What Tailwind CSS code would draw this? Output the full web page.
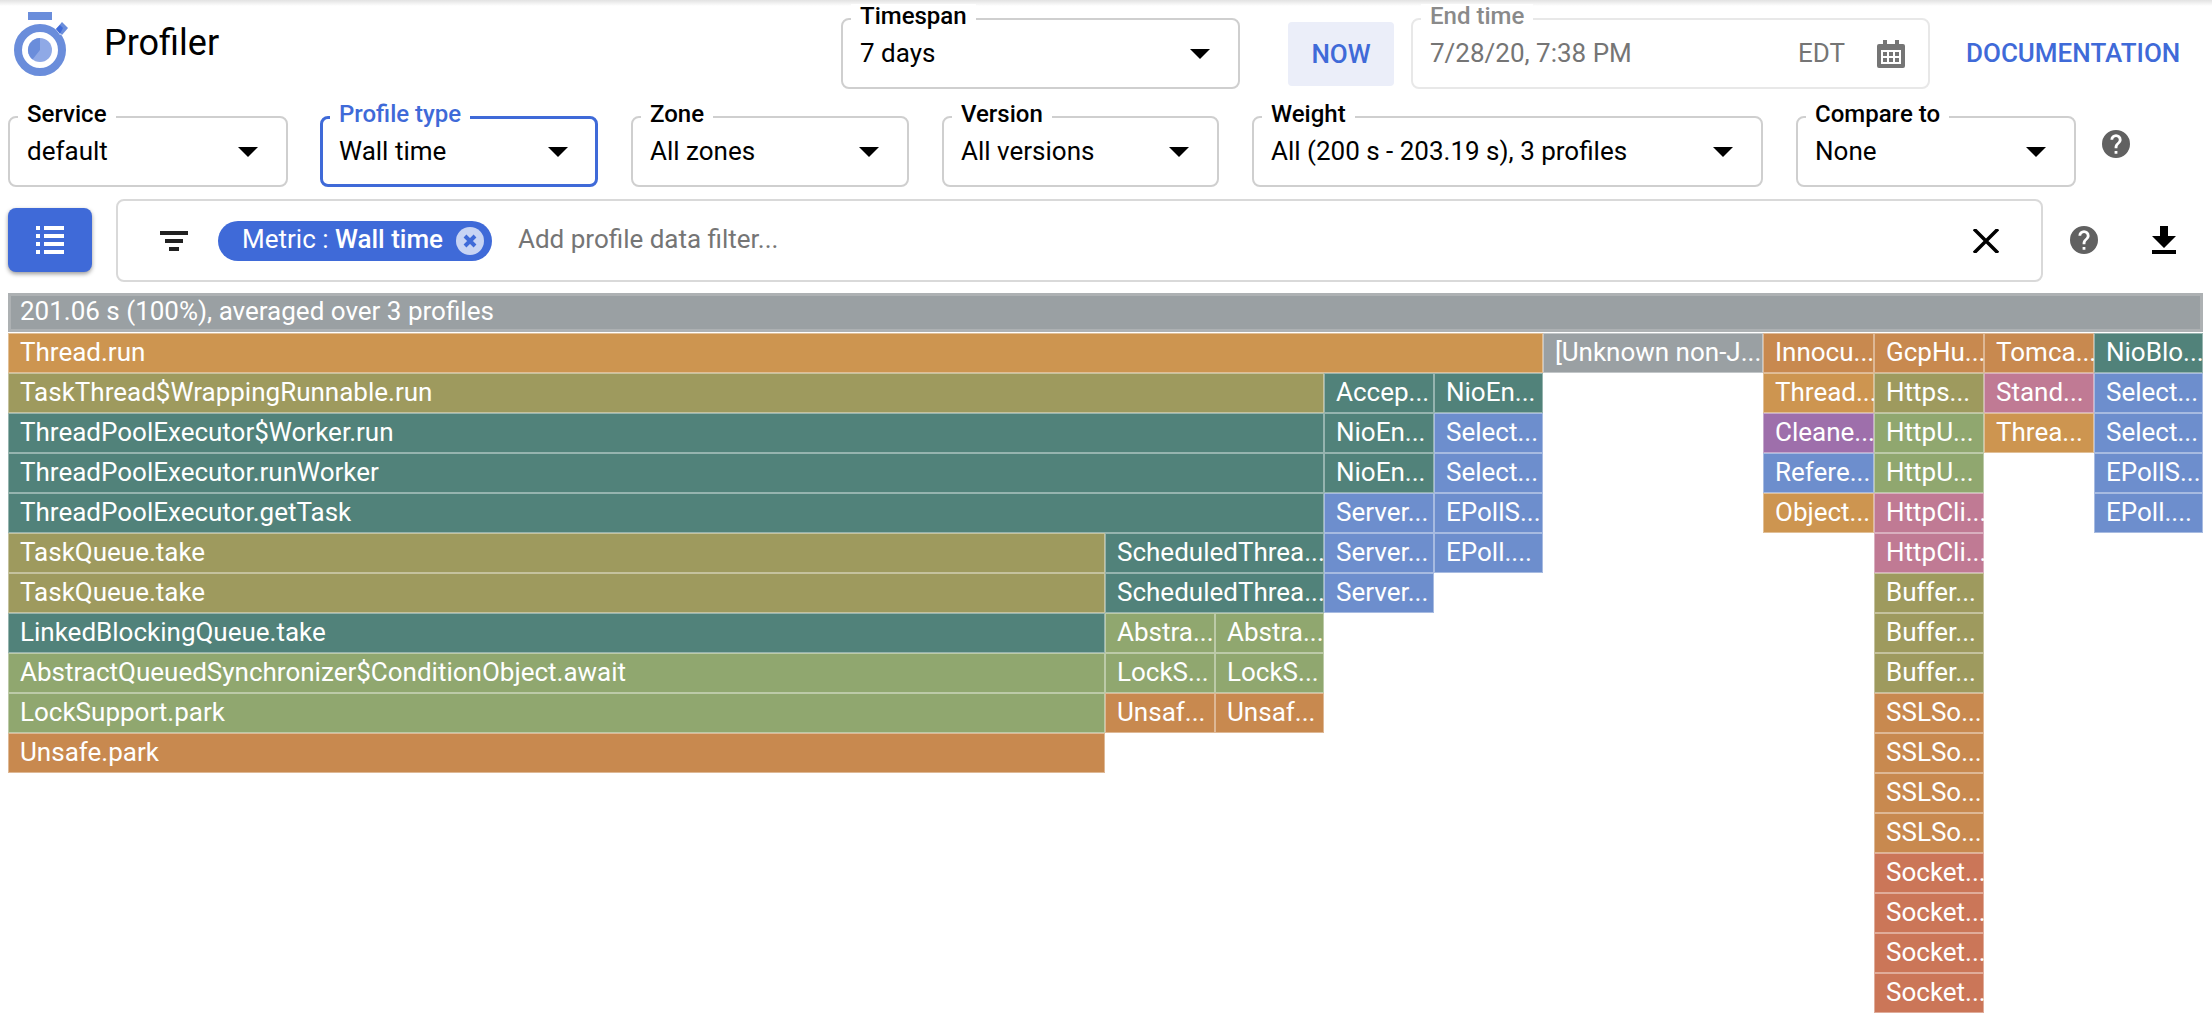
<!DOCTYPE html>
<html lang="en">
<head>
    <meta charset="UTF-8">
    <title>Profiler</title>
    <script src="https://cdn.jsdelivr.net/npm/@tailwindcss/browser@4"></script>
</head>
<body class="bg-white h-[1016px] w-[2212px] overflow-hidden font-['Roboto',sans-serif] text-black">
    <!-- Top shadow line -->
    <div class="h-[6px] bg-gradient-to-b from-[#e2e2e2] to-white"></div>

    <!-- Header -->
    <div class="flex items-start h-[110px]">
        <svg class="ml-[14px] mt-[6px] w-[54px] h-[66px] shrink-0" viewBox="14 12 54 66">
            <rect x="28" y="12" width="24" height="8" fill="#6a8ddb"/>
            <circle cx="40" cy="50" r="22" fill="none" stroke="#6a8ddb" stroke-width="8"/>
            <path d="M55 28l8-7 5 6-8 8z" fill="#fff"/>
            <path d="M62 22l6 6-6 7-6-6z" fill="#6a8ddb"/>
            <path d="M56 29l4-4 3 3-3 6z" fill="#3f6ad8"/>
            <circle cx="40" cy="50" r="12" fill="#8fa9e6"/>
            <path d="M40 50V38a12 12 0 0 0-7.5 21.4z" fill="#6a8ddb"/>
        </svg>
        <div class="ml-[36px] mt-[15px] w-[737px] text-[36px] leading-[44px]">Profiler</div>

        <!-- Timespan -->
        <div class="relative mt-[12px] w-[399px] h-[71px] rounded-lg border-2 border-[#cfcfcf] pl-[17px] pr-[28px] flex items-center">
            <span class="absolute -top-[16px] left-[8px] bg-white px-[9px] text-[24px] leading-[24px] font-medium">Timespan</span>
            <span class="text-[26px]">7 days</span>
            <svg class="ml-auto w-[20px] h-[10px]" viewBox="0 0 20 10"><path d="M0 0h20L10 10z"/></svg>
        </div>

        <button class="ml-[48px] mt-[16px] w-[106px] h-[64px] rounded bg-[#ebeef9] text-[#3f6ad8] text-[26px] font-medium">NOW</button>

        <!-- End time -->
        <div class="relative ml-[17px] mt-[12px] w-[519px] h-[71px] rounded-lg border-2 border-[#e8e8e8] pl-[17px] pr-[23px] flex items-center text-[#757575]">
            <span class="absolute -top-[16px] left-[8px] bg-white px-[9px] text-[24px] leading-[24px] font-medium text-[#8a8a8a]">End time</span>
            <span class="text-[26px]">7/28/20, 7:38 PM</span>
            <span class="ml-auto text-[26px]">EDT</span>
            <svg class="ml-[32px] w-[28px] h-[28px]" viewBox="0 0 28 28" fill="#757575">
                <path fill-rule="evenodd" d="M6 0h4v4h8V0h4v4h4a2 2 0 0 1 2 2v20a2 2 0 0 1-2 2H2a2 2 0 0 1-2-2V6a2 2 0 0 1 2-2h4zM4 10v14h20V10z"/>
                <path d="M6 12h4v4H6zM12 12h4v4h-4zM18 12h4v4h-4zM6 18h4v4H6zM12 18h4v4h-4zM18 18h4v4h-4z"/>
            </svg>
        </div>

        <a class="ml-[36px] mt-[30px] text-[#3f6ad8] text-[26px] leading-[34px] font-medium">DOCUMENTATION</a>
    </div>

    <!-- Filter row -->
    <div class="flex items-start h-[83px] pl-[8px]">
        <div class="relative w-[280px] h-[71px] rounded-lg border-2 border-[#cfcfcf] pl-[17px] pr-[28px] flex items-center">
            <span class="absolute -top-[16px] left-[8px] bg-white px-[9px] text-[24px] leading-[24px] font-medium">Service</span>
            <span class="text-[26px]">default</span>
            <svg class="ml-auto w-[20px] h-[10px]" viewBox="0 0 20 10"><path d="M0 0h20L10 10z"/></svg>
        </div>
        <div class="relative ml-[32px] w-[278px] h-[71px] rounded-lg border-[3px] border-[#3f6ad8] pl-[16px] pr-[27px] flex items-center">
            <span class="absolute -top-[17px] left-[7px] bg-white px-[9px] text-[24px] leading-[24px] font-medium text-[#3f6ad8]">Profile type</span>
            <span class="text-[26px]">Wall time</span>
            <svg class="ml-auto w-[20px] h-[10px]" viewBox="0 0 20 10"><path d="M0 0h20L10 10z"/></svg>
        </div>
        <div class="relative ml-[33px] w-[278px] h-[71px] rounded-lg border-2 border-[#cfcfcf] pl-[17px] pr-[28px] flex items-center">
            <span class="absolute -top-[16px] left-[8px] bg-white px-[9px] text-[24px] leading-[24px] font-medium">Zone</span>
            <span class="text-[26px]">All zones</span>
            <svg class="ml-auto w-[20px] h-[10px]" viewBox="0 0 20 10"><path d="M0 0h20L10 10z"/></svg>
        </div>
        <div class="relative ml-[33px] w-[277px] h-[71px] rounded-lg border-2 border-[#cfcfcf] pl-[17px] pr-[28px] flex items-center">
            <span class="absolute -top-[16px] left-[8px] bg-white px-[9px] text-[24px] leading-[24px] font-medium">Version</span>
            <span class="text-[26px]">All versions</span>
            <svg class="ml-auto w-[20px] h-[10px]" viewBox="0 0 20 10"><path d="M0 0h20L10 10z"/></svg>
        </div>
        <div class="relative ml-[33px] w-[511px] h-[71px] rounded-lg border-2 border-[#cfcfcf] pl-[17px] pr-[28px] flex items-center">
            <span class="absolute -top-[16px] left-[8px] bg-white px-[9px] text-[24px] leading-[24px] font-medium">Weight</span>
            <span class="text-[26px]">All (200 s - 203.19 s), 3 profiles</span>
            <svg class="ml-auto w-[20px] h-[10px]" viewBox="0 0 20 10"><path d="M0 0h20L10 10z"/></svg>
        </div>
        <div class="relative ml-[33px] w-[280px] h-[71px] rounded-lg border-2 border-[#cfcfcf] pl-[17px] pr-[28px] flex items-center">
            <span class="absolute -top-[16px] left-[8px] bg-white px-[9px] text-[24px] leading-[24px] font-medium">Compare to</span>
            <span class="text-[26px]">None</span>
            <svg class="ml-auto w-[20px] h-[10px]" viewBox="0 0 20 10"><path d="M0 0h20L10 10z"/></svg>
        </div>
        <svg class="ml-[26px] mt-[14px] w-[28px] h-[28px]" viewBox="2 2 20 20" fill="#616161"><path d="M12 2a10 10 0 1 0 0 20 10 10 0 0 0 0-20zm1 17h-2v-2h2zm2.07-7.75-.9.92C13.45 12.9 13 13.5 13 15h-2v-.5c0-1.1.45-2.1 1.17-2.83l1.24-1.26A2 2 0 1 0 10 9H8a4 4 0 1 1 8 0c0 .88-.36 1.68-.93 2.25z"/></svg>
    </div>

    <!-- Search row -->
    <div class="flex items-start h-[94px] pl-[8px]">
        <button class="mt-[9px] w-[84px] h-[64px] rounded-lg bg-[#3f6ad8] shadow-[0_2px_4px_rgba(0,0,0,0.4)] flex items-center justify-center">
            <svg class="w-[28px] h-[28px]" viewBox="0 0 28 28" fill="#fff"><path d="M0 0h4v4H0zM8 0h20v4H8zM0 8h4v4H0zM8 8h20v4H8zM0 16h4v4H0zM8 16h20v4H8zM0 24h4v4H0zM8 24h20v4H8z"/></svg>
        </button>
        <div class="ml-[24px] w-[1927px] h-[83px] rounded-lg border-2 border-[#d9d9d9] flex items-center">
            <svg class="ml-[42px] w-[28px] h-[20px]" viewBox="0 0 28 20" fill="#212121"><path d="M0 0h28v4H0zM5 8h18v4H5zM9 16h10v4H9z"/></svg>
            <div class="ml-[30px] w-[274px] h-[40px] rounded-full bg-[#3f6ad8] flex items-center pl-[24px] text-[26px] text-white">
                <span class="whitespace-nowrap mb-[2px]">Metric : <span class="font-medium">Wall time</span></span>
                <svg class="ml-auto mr-[8px] w-[28px] h-[28px]" viewBox="0 0 28 28"><circle cx="14" cy="14" r="14" fill="#c8d4f4"/><path d="M9 9l10 10M19 9L9 19" stroke="#3f6ad8" stroke-width="4"/></svg>
            </div>
            <span class="ml-[26px] mb-[2px] text-[26px] text-[#757575]">Add profile data filter...</span>
            <svg class="ml-auto mr-[42px] w-[26px] h-[24px]" viewBox="0 0 26 24" fill="none" stroke="#000" stroke-width="3.5"><path d="M1 0l24 24M25 0L1 24"/></svg>
        </div>
        <svg class="ml-[27px] mt-[27px] w-[28px] h-[28px]" viewBox="2 2 20 20" fill="#616161"><path d="M12 2a10 10 0 1 0 0 20 10 10 0 0 0 0-20zm1 17h-2v-2h2zm2.07-7.75-.9.92C13.45 12.9 13 13.5 13 15h-2v-.5c0-1.1.45-2.1 1.17-2.83l1.24-1.26A2 2 0 1 0 10 9H8a4 4 0 1 1 8 0c0 .88-.36 1.68-.93 2.25z"/></svg>
        <svg class="ml-[54px] mt-[27px] w-[24px] h-[28px]" viewBox="0 0 24 28" fill="#000"><path d="M8 0h8v10h8L12 22 0 10h8zM0 24h24v4H0z"/></svg>
    </div>

    <!-- Flame graph -->
    <div class="ml-[8px] grid grid-cols-[1097px_110px_109px_110px_109px_220px_111px_110px_110px_109px] auto-rows-[40px] text-[26px] leading-[36px] text-white whitespace-nowrap">
        <div class="col-span-10 h-[39px] pl-[9px] border-[3px] border-[#adb1b3] bg-[#9aa0a3] leading-[31px]">201.06 s (100%), averaged over 3 profiles</div>

        <div class="col-start-1 col-span-5 bg-[#cd9550] border border-white/40 pl-[11px]">Thread.run</div>
        <div class="bg-[#9aa0a3] border border-white/40 pl-[11px]">[Unknown non-J...</div>
        <div class="bg-[#c8894f] border border-white/40 pl-[11px]">Innocu...</div>
        <div class="bg-[#c8894f] border border-white/40 pl-[11px]">GcpHu...</div>
        <div class="bg-[#c8894f] border border-white/40 pl-[11px]">Tomca...</div>
        <div class="bg-[#51827a] border border-white/40 pl-[11px]">NioBlo...</div>

        <div class="col-start-1 col-span-3 bg-[#9e9a5e] border border-white/40 pl-[11px]">TaskThread$WrappingRunnable.run</div>
        <div class="bg-[#51827a] border border-white/40 pl-[11px]">Accep...</div>
        <div class="bg-[#51827a] border border-white/40 pl-[11px]">NioEn...</div>
        <div class="col-start-7 bg-[#cd9550] border border-white/40 pl-[11px]">Thread...</div>
        <div class="bg-[#9e9a5e] border border-white/40 pl-[11px]">Https...</div>
        <div class="bg-[#c07a94] border border-white/40 pl-[11px]">Stand...</div>
        <div class="bg-[#6d8ecd] border border-white/40 pl-[11px]">Select...</div>

        <div class="col-start-1 col-span-3 bg-[#51827a] border border-white/40 pl-[11px]">ThreadPoolExecutor$Worker.run</div>
        <div class="bg-[#51827a] border border-white/40 pl-[11px]">NioEn...</div>
        <div class="bg-[#6d8ecd] border border-white/40 pl-[11px]">Select...</div>
        <div class="col-start-7 bg-[#9e6fab] border border-white/40 pl-[11px]">Cleane...</div>
        <div class="bg-[#90a76f] border border-white/40 pl-[11px]">HttpU...</div>
        <div class="bg-[#cd9550] border border-white/40 pl-[11px]">Threa...</div>
        <div class="bg-[#6d8ecd] border border-white/40 pl-[11px]">Select...</div>

        <div class="col-start-1 col-span-3 bg-[#51827a] border border-white/40 pl-[11px]">ThreadPoolExecutor.runWorker</div>
        <div class="bg-[#51827a] border border-white/40 pl-[11px]">NioEn...</div>
        <div class="bg-[#6d8ecd] border border-white/40 pl-[11px]">Select...</div>
        <div class="col-start-7 bg-[#6d8ecd] border border-white/40 pl-[11px]">Refere...</div>
        <div class="bg-[#90a76f] border border-white/40 pl-[11px]">HttpU...</div>
        <div class="col-start-10 bg-[#6d8ecd] border border-white/40 pl-[11px]">EPollS...</div>

        <div class="col-start-1 col-span-3 bg-[#51827a] border border-white/40 pl-[11px]">ThreadPoolExecutor.getTask</div>
        <div class="bg-[#6d8ecd] border border-white/40 pl-[11px]">Server...</div>
        <div class="bg-[#6d8ecd] border border-white/40 pl-[11px]">EPollS...</div>
        <div class="col-start-7 bg-[#cd9550] border border-white/40 pl-[11px]">Object...</div>
        <div class="bg-[#c07a94] border border-white/40 pl-[11px]">HttpCli...</div>
        <div class="col-start-10 bg-[#6d8ecd] border border-white/40 pl-[11px]">EPoll....</div>

        <div class="col-start-1 bg-[#9e9a5e] border border-white/40 pl-[11px]">TaskQueue.take</div>
        <div class="col-span-2 bg-[#51827a] border border-white/40 pl-[11px]">ScheduledThrea...</div>
        <div class="bg-[#6d8ecd] border border-white/40 pl-[11px]">Server...</div>
        <div class="bg-[#6d8ecd] border border-white/40 pl-[11px]">EPoll....</div>
        <div class="col-start-8 bg-[#c07a94] border border-white/40 pl-[11px]">HttpCli...</div>

        <div class="col-start-1 bg-[#9e9a5e] border border-white/40 pl-[11px]">TaskQueue.take</div>
        <div class="col-span-2 bg-[#51827a] border border-white/40 pl-[11px]">ScheduledThrea...</div>
        <div class="bg-[#6d8ecd] border border-white/40 pl-[11px]">Server...</div>
        <div class="col-start-8 bg-[#9e9a5e] border border-white/40 pl-[11px]">Buffer...</div>

        <div class="col-start-1 bg-[#51827a] border border-white/40 pl-[11px]">LinkedBlockingQueue.take</div>
        <div class="bg-[#90a76f] border border-white/40 pl-[11px]">Abstra...</div>
        <div class="bg-[#90a76f] border border-white/40 pl-[11px]">Abstra...</div>
        <div class="col-start-8 bg-[#9e9a5e] border border-white/40 pl-[11px]">Buffer...</div>

        <div class="col-start-1 bg-[#90a76f] border border-white/40 pl-[11px]">AbstractQueuedSynchronizer$ConditionObject.await</div>
        <div class="bg-[#90a76f] border border-white/40 pl-[11px]">LockS...</div>
        <div class="bg-[#90a76f] border border-white/40 pl-[11px]">LockS...</div>
        <div class="col-start-8 bg-[#9e9a5e] border border-white/40 pl-[11px]">Buffer...</div>

        <div class="col-start-1 bg-[#90a76f] border border-white/40 pl-[11px]">LockSupport.park</div>
        <div class="bg-[#c8894f] border border-white/40 pl-[11px]">Unsaf...</div>
        <div class="bg-[#c8894f] border border-white/40 pl-[11px]">Unsaf...</div>
        <div class="col-start-8 bg-[#c8894f] border border-white/40 pl-[11px]">SSLSo...</div>

        <div class="col-start-1 bg-[#c8894f] border border-white/40 pl-[11px]">Unsafe.park</div>
        <div class="col-start-8 bg-[#c8894f] border border-white/40 pl-[11px]">SSLSo...</div>
        <div class="col-start-8 bg-[#c8894f] border border-white/40 pl-[11px]">SSLSo...</div>
        <div class="col-start-8 bg-[#c8894f] border border-white/40 pl-[11px]">SSLSo...</div>
        <div class="col-start-8 bg-[#cb7658] border border-white/40 pl-[11px]">Socket...</div>
        <div class="col-start-8 bg-[#cb7658] border border-white/40 pl-[11px]">Socket...</div>
        <div class="col-start-8 bg-[#cb7658] border border-white/40 pl-[11px]">Socket...</div>
        <div class="col-start-8 bg-[#cb7658] border border-white/40 pl-[11px]">Socket...</div>
    </div>
</body>
</html>
